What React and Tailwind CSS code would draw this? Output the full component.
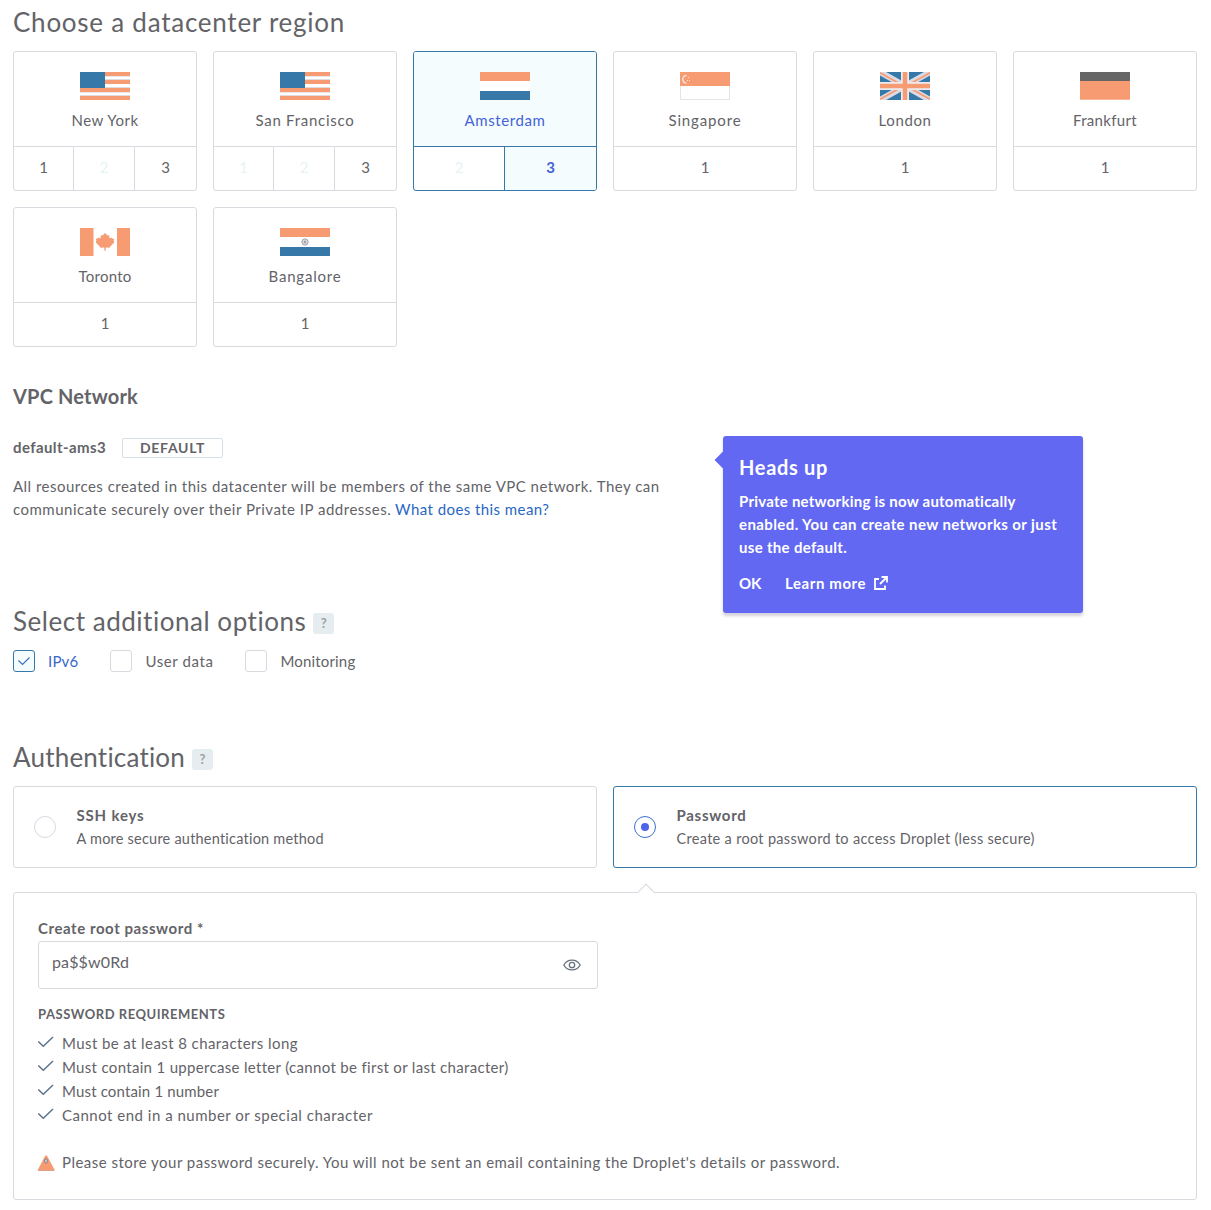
const BLUE = "#3678a8";
const ORANGE = "#f79b72";

function FlagUS() {
  return (
    <svg width="50" height="28" viewBox="0 0 50 28" shapeRendering="crispEdges">
      <rect width="50" height="28" fill="#fff" />
      <g fill="#dcdce1">
        <rect y="7" width="50" height="1" />
        <rect y="15" width="50" height="1" />
        <rect y="23" width="50" height="1" />
        <rect y="20" width="50" height="1" opacity=".6" />
        <rect y="4" width="50" height="1" opacity=".6" />
      </g>
      <g fill={ORANGE}>
        <rect width="50" height="4" />
        <rect y="8" width="50" height="4" />
        <rect y="16" width="50" height="4" />
        <rect y="24" width="50" height="4" />
      </g>
      <rect width="25" height="16" fill={BLUE} />
    </svg>
  );
}

function FlagNL() {
  return (
    <svg width="50" height="28" viewBox="0 0 50 28" shapeRendering="crispEdges">
      <rect width="50" height="28" fill="#fff" />
      <rect width="50" height="9" fill={ORANGE} />
      <rect y="19" width="50" height="9" fill={BLUE} />
    </svg>
  );
}

function FlagSG() {
  return (
    <svg width="50" height="28" viewBox="0 0 50 28">
      <rect x=".5" y=".5" width="49" height="27" fill="#fff" stroke="#e0e6ea" />
      <rect width="50" height="14" fill={ORANGE} />
      <path d="M6.5 3.5a3.8 3.8 0 0 0 0 7.6" fill="none" stroke="#f1eef2" strokeWidth="1.3" />
      <g fill="#fbe3d8">
        <rect x="8" y="5" width="1" height="1" />
        <rect x="7" y="8" width="1" height="1" />
        <rect x="9" y="8" width="1" height="1" />
      </g>
    </svg>
  );
}

function FlagUK() {
  return (
    <svg width="50" height="28" viewBox="0 0 50 28">
      <rect width="50" height="28" fill={BLUE} />
      <path d="M0 0L50 28M50 0L0 28" stroke="#dcdbe4" strokeWidth="6" />
      <path d="M0 0.8L22 13M50 27.2L28 15M50 0.8L28 13M0 27.2L22 15" stroke={ORANGE} strokeWidth="1.8" />
      <path d="M25 0V28M0 14H50" stroke="#ececf0" strokeWidth="8" />
      <path d="M25 0V28M0 14H50" stroke={ORANGE} strokeWidth="4.5" />
    </svg>
  );
}

function FlagDE() {
  return (
    <svg width="50" height="28" viewBox="0 0 50 28" shapeRendering="crispEdges">
      <rect width="50" height="28" fill={ORANGE} />
      <rect width="50" height="9" fill="#666" />
      <rect y="27" width="50" height="1" fill="#f9b597" />
    </svg>
  );
}

function FlagCA() {
  return (
    <svg width="50" height="28" viewBox="0 0 50 28">
      <rect width="50" height="28" fill="#fff" />
      <rect width="13.5" height="28" fill={ORANGE} />
      <rect x="37" width="13" height="28" fill={ORANGE} />
      <path
        d="M25 5l2.2 2.2 2 .2.4 3 2-.8.8 1 1.8.4-.6 2 .8 1.2-4.2 4.4-.6 1.2-3.8-.2-.3 3.4h-1l-.3-3.4-3.8.2-.6-1.2-4.2-4.4.8-1.2-.6-2 1.8-.4.8-1 2 .8.4-3 2-.2z"
        fill={ORANGE}
      />
    </svg>
  );
}

function FlagIN() {
  return (
    <svg width="50" height="28" viewBox="0 0 50 28">
      <rect width="50" height="28" fill="#fff" />
      <rect width="50" height="9" fill={ORANGE} />
      <rect y="19" width="50" height="9" fill={BLUE} />
      <circle cx="25" cy="14" r="3.1" fill="#f1f1f4" stroke="#9b9ba3" />
      <path d="M25 12v4M23.4 13l3.2 2M26.6 13l-3.2 2" stroke="#8a8a99" strokeWidth=".7" />
    </svg>
  );
}

const regions = [
  { name: "New York", tracking: "tracking-[0.49px]", Flag: FlagUS, slots: [{ n: 1 }, { n: 2, off: true }, { n: 3 }] },
  { name: "San Francisco", tracking: "tracking-[0.73px]", Flag: FlagUS, slots: [{ n: 1, off: true }, { n: 2, off: true }, { n: 3 }] },
  { name: "Amsterdam", tracking: "tracking-[0.6px]", Flag: FlagNL, active: true, slots: [{ n: 2, off: true }, { n: 3, on: true }] },
  { name: "Singapore", tracking: "tracking-[0.86px]", Flag: FlagSG, slots: [{ n: 1 }] },
  { name: "London", tracking: "tracking-[0.61px]", Flag: FlagUK, slots: [{ n: 1 }] },
  { name: "Frankfurt", tracking: "tracking-[0.32px]", Flag: FlagDE, slots: [{ n: 1 }] },
  { name: "Toronto", tracking: "tracking-[0.24px]", Flag: FlagCA, slots: [{ n: 1 }] },
  { name: "Bangalore", tracking: "tracking-[0.8px]", Flag: FlagIN, slots: [{ n: 1 }] },
];

// Every cell but the last carries its own right-hand divider.
const slotWidths = {
  1: ["w-full"],
  2: ["w-[91px] border-r", "flex-1"],
  3: ["w-[60px] border-r", "w-[61px] border-r", "flex-1"],
};

function RegionCard({ region }) {
  const { name, tracking, Flag, active, slots } = region;
  const border = active ? "border-[#3678a8]" : "border-[#d9d9e0]";
  return (
    <div className={`flex h-[140px] flex-col overflow-hidden rounded-[3px] border ${border}`}>
      <div className={`flex h-[94px] flex-col items-center pt-5 ${active ? "bg-[#f5fcfd] text-[#4263d8]" : ""}`}>
        <Flag />
        <span className={`mt-[9px] leading-[22px] ${tracking}`}>{name}</span>
      </div>
      <div className={`flex flex-1 border-t ${border}`}>
        {slots.map((s, i) => (
          <div
            key={s.n}
            className={`flex items-center justify-center pb-[3px] ${border} ${slotWidths[slots.length][i]} ${
              s.off ? "text-[#e6f3f5]" : s.on ? "bg-[#f5fcfd] font-bold text-[#4263d8]" : ""
            }`}
          >
            {s.n}
          </div>
        ))}
      </div>
    </div>
  );
}

function Help() {
  return (
    <span className="mt-[3px] ml-[7px] flex h-[21px] w-[21px] items-center justify-center rounded-[3px] bg-[#e5edf1] text-[13px] font-bold text-[#9d9fa4]">
      ?
    </span>
  );
}

function Option({ label, tracking, checked }) {
  return (
    <label className="flex items-center">
      <span
        className={`flex h-[22px] w-[22px] items-center justify-center rounded-[3px] border ${
          checked ? "border-[#3678a8] bg-[#f5fcfd]" : "border-[#d9d9e0]"
        }`}
      >
        {checked && (
          <svg className="mr-px mb-px" width="14" height="12" viewBox="0 0 14 12" fill="none" stroke="#3a70bd" strokeWidth="1.2">
            <path d="M1.5 5.5L5.5 9.5L12.5 2.5" />
          </svg>
        )}
      </span>
      <span className={`ml-[13px] ${tracking} ${checked ? "text-[#3a67cc]" : ""}`}>{label}</span>
    </label>
  );
}

function AuthCard({ title, titleTracking, text, textTracking, selected }) {
  return (
    <div
      className={`flex h-[82px] items-center rounded-[3px] border pl-5 ${
        selected ? "border-[#3678a8]" : "border-[#d9d9e0]"
      }`}
    >
      <span
        className={`flex h-[22px] w-[22px] items-center justify-center rounded-full border ${
          selected ? "border-[#3e70cc]" : "border-[#d5dae0]"
        }`}
      >
        {selected && <span className="h-2 w-2 rounded-full bg-[#4e64ea]" />}
      </span>
      <div className="ml-[20.5px] leading-[23px]">
        <div className={`font-bold ${titleTracking}`}>{title}</div>
        <div className={`text-[14.5px] ${textTracking}`}>{text}</div>
      </div>
    </div>
  );
}

const requirements = [
  ["Must be at least 8 characters long", "tracking-[0.41px]"],
  ["Must contain 1 uppercase letter (cannot be first or last character)", "tracking-[0.32px]"],
  ["Must contain 1 number", "tracking-[0.16px]"],
  ["Cannot end in a number or special character", "tracking-[0.5px]"],
];

function Callout() {
  return (
    <div className="absolute top-[54px] left-[710px] h-[177px] w-[360px] rounded-[3px] bg-[#6268f1] px-4 pt-[17px] font-bold text-white shadow-[0_3px_3px_rgba(80,70,110,0.25)]">
      <span className="absolute top-[18px] -left-[6px] h-3 w-3 rotate-45 bg-[#6268f1]" />
      <h4 className="relative text-[20px] leading-[28px] tracking-[0.68px]">Heads up</h4>
      <p className="mt-[9px] leading-[23px]">
        <span className="block tracking-[0.24px]">Private networking is now automatically</span>
        <span className="block tracking-[0.4px]">enabled. You can create new networks or just</span>
        <span className="block tracking-[0.31px]">use the default.</span>
      </p>
      <div className="mt-[13px] flex items-center leading-[23px]">
        <span>OK</span>
        <span className="ml-[23.5px] tracking-[0.6px]">Learn more</span>
        <svg className="mb-px ml-2" width="14" height="14" viewBox="0 0 14 14" fill="none" stroke="#fff" strokeWidth="1.8">
          <path d="M5 3H1V13H11V9.5" />
          <path d="M7.5 1H13V6.5M13 1L6 8" />
        </svg>
      </div>
    </div>
  );
}

export default function App() {
  return (
    <main className="h-[1210px] bg-white pr-[14px] pl-[13px] font-['Lato',sans-serif] text-[15px] text-[#636368]">
      <h2 className="text-[26px] leading-[44px] tracking-[0.75px]">Choose a datacenter region</h2>
      <section className="mt-[7px] grid grid-cols-6 gap-4">
        {regions.map((r) => (
          <RegionCard key={r.name} region={r} />
        ))}
      </section>

      <section className="relative mt-[35px]">
        <h3 className="text-[20px] leading-[28px] font-bold tracking-[0.18px]">VPC Network</h3>
        <div className="mt-7 flex h-5 items-center font-bold">
          <span className="pb-0.5 tracking-[0.4px]">default-ams3</span>
          <span className="ml-4 flex h-5 w-[101px] items-center justify-center rounded-[2px] border border-[#d3e0e6] pb-0.5 text-[14px] tracking-[0.7px]">
            DEFAULT
          </span>
        </div>
        <p className="mt-[17px] leading-[23px]">
          <span className="block tracking-[0.48px]">
            All resources created in this datacenter will be members of the same VPC network. They can
          </span>
          <span className="tracking-[0.5px]">communicate securely over their Private IP addresses.</span>{" "}
          <a className="tracking-[0.43px] text-[#2a67c4]">What does this mean?</a>
        </p>
        <Callout />
      </section>

      <section className="mt-[78px]">
        <div className="flex items-center">
          <h2 className="text-[26px] leading-[44px] tracking-[0.53px]">Select additional options</h2>
          <div className="mt-0.5">
            <Help />
          </div>
        </div>
        <div className="mt-[7px] flex h-[22px] items-center">
          <Option label="IPv6" tracking="tracking-[0.2px]" checked />
          <div className="w-8" />
          <Option label="User data" tracking="tracking-[0.59px]" />
          <div className="w-8" />
          <Option label="Monitoring" tracking="tracking-[0.17px]" />
        </div>
      </section>

      <section className="mt-[63px]">
        <div className="flex items-center">
          <h2 className="text-[26px] leading-[44px] tracking-[0.2px]">Authentication</h2>
          <div className="mt-0.5">
            <Help />
          </div>
        </div>
        <div className="mt-[7px] grid grid-cols-2 gap-4">
          <AuthCard
            title="SSH keys"
            titleTracking="tracking-[0.82px]"
            text="A more secure authentication method"
            textTracking="tracking-[0.22px]"
          />
          <AuthCard
            title="Password"
            titleTracking="tracking-[0.71px]"
            text="Create a root password to access Droplet (less secure)"
            textTracking="tracking-[0.31px]"
            selected
          />
        </div>

        <div className="relative mt-6 h-[308px] rounded-[3px] border border-[#d9d9e0] pt-[23px] pl-6">
          <span className="absolute -top-[7px] left-[626px] h-3 w-3 rotate-45 border-t border-l border-[#d5dae0] bg-white" />
          <div className="leading-6 font-bold tracking-[0.57px]">Create root password *</div>
          <div className="mt-px flex h-12 w-[560px] items-center justify-between rounded-[3px] border border-[#d9d9e0] pr-4 pl-[13px]">
            <span className="pb-[6px] text-[16px] tracking-[0.14px]">pa$$w0Rd</span>
            <svg width="18" height="12" viewBox="0 0 18 12" fill="none" stroke="#68727c" strokeWidth="1.3">
              <path d="M.8 6C4.5-.6 13.5-.6 17.2 6C13.5 12.6 4.5 12.6.8 6z" />
              <circle cx="9" cy="6" r="2.7" />
            </svg>
          </div>
          <div className="mt-[15px] text-[13px] leading-5 font-bold tracking-[0.53px]">PASSWORD REQUIREMENTS</div>
          <ul className="mt-[7px]">
            {requirements.map(([text, tracking]) => (
              <li key={text} className="flex h-6 items-center">
                <svg className="mb-[3px]" width="16" height="12" viewBox="0 0 16 12" fill="none" stroke="#5b738c" strokeWidth="1.5">
                  <path d="M.3 5.5L5.3 10.3L15 1" />
                </svg>
                <span className={`ml-2 ${tracking}`}>{text}</span>
              </li>
            ))}
          </ul>
          <div className="mt-[23px] flex h-6 items-center">
            <svg className="-ml-px mt-px" width="18" height="16" viewBox="0 0 18 16">
              <path d="M8.3 .5H9.9L18 15.5H.5z" fill={ORANGE} />
              <ellipse cx="9" cy="6" rx="1.3" ry="2.2" fill="#e6e2e6" stroke="#6f7480" strokeWidth=".9" />
              <path d="M1.5 15.5H17.5" stroke="#b9775c" strokeWidth="1" strokeDasharray="1 1" />
            </svg>
            <span className="ml-[7px] tracking-[0.47px]">
              Please store your password securely. You will not be sent an email containing the Droplet's details or
              password.
            </span>
          </div>
        </div>
      </section>
    </main>
  );
}
